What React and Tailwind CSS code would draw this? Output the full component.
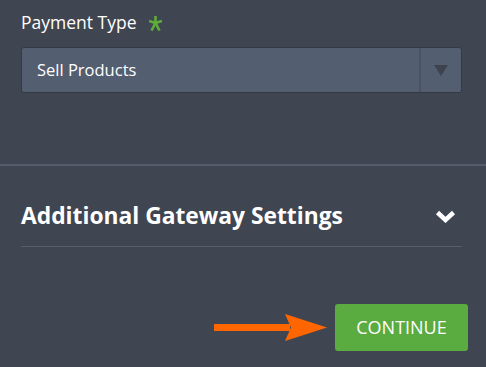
export default function App() {
  return (
    <div className="w-[486px] h-[367px] overflow-hidden bg-[#3f4651] font-['Open_Sans',sans-serif] text-white">
      {/* Payment type field */}
      <div className="pl-[21px] pr-[24px] pt-[10px] h-[164px]">
        <div className="flex items-center h-[26px] text-[17.5px] leading-none">
          <span>Payment Type</span>
          <svg className="ml-[12px]" width="13" height="15" viewBox="0 0 13 15">
            <g stroke="#5fae3b" strokeWidth="2.6" strokeLinecap="butt">
              <line x1="6.5" y1="0" x2="6.5" y2="7" />
              <line x1="0" y1="5" x2="6.5" y2="7" />
              <line x1="13" y1="5" x2="6.5" y2="7" />
              <line x1="2.5" y1="14.5" x2="6.5" y2="7" />
              <line x1="10.5" y1="14.5" x2="6.5" y2="7" />
            </g>
          </svg>
        </div>
        <div className="mt-[11px] flex h-[46px] rounded-[3px] border border-[#343a43] bg-[#535e70]">
          <div className="flex-1 flex items-center pl-[15px] text-[16.5px]">Sell Products</div>
          <div className="w-[2px] bg-[#4a5363]" />
          <div className="w-[40px] flex items-center justify-center">
            <svg width="14" height="11" viewBox="0 0 14 11">
              <polygon points="0,0 14,0 7,11" fill="#3d4450" />
            </svg>
          </div>
        </div>
      </div>

      <div className="h-[2px] bg-[#525c6a]" />

      {/* Additional settings */}
      <div className="pl-[21px] pr-[24px]">
        <div className="flex items-center justify-between h-[81px] border-b border-[#555f6d] pt-[21px]">
          <span className="text-[22.8px] font-bold">Additional Gateway Settings</span>
          <svg className="mr-[6px]" width="21" height="13" viewBox="0 0 21 13">
            <polyline points="2.5,2.5 10.5,10 18.5,2.5" fill="none" stroke="white" strokeWidth="4.5" />
          </svg>
        </div>
      </div>

      {/* Continue */}
      <div className="flex items-center justify-end pr-[18px] pt-[57px]">
        <svg width="114" height="28" viewBox="0 0 114 28" className="mr-[7px]">
          <rect x="0" y="10" width="76" height="7" fill="#ff6600" />
          <polygon points="71,0 113,13.5 71,27 77,13.5" fill="#ff6600" />
        </svg>
        <button className="w-[133px] h-[47px] rounded-[3px] bg-[#5aab40] text-[18px] text-white">
          CONTINUE
        </button>
      </div>
    </div>
  );
}
